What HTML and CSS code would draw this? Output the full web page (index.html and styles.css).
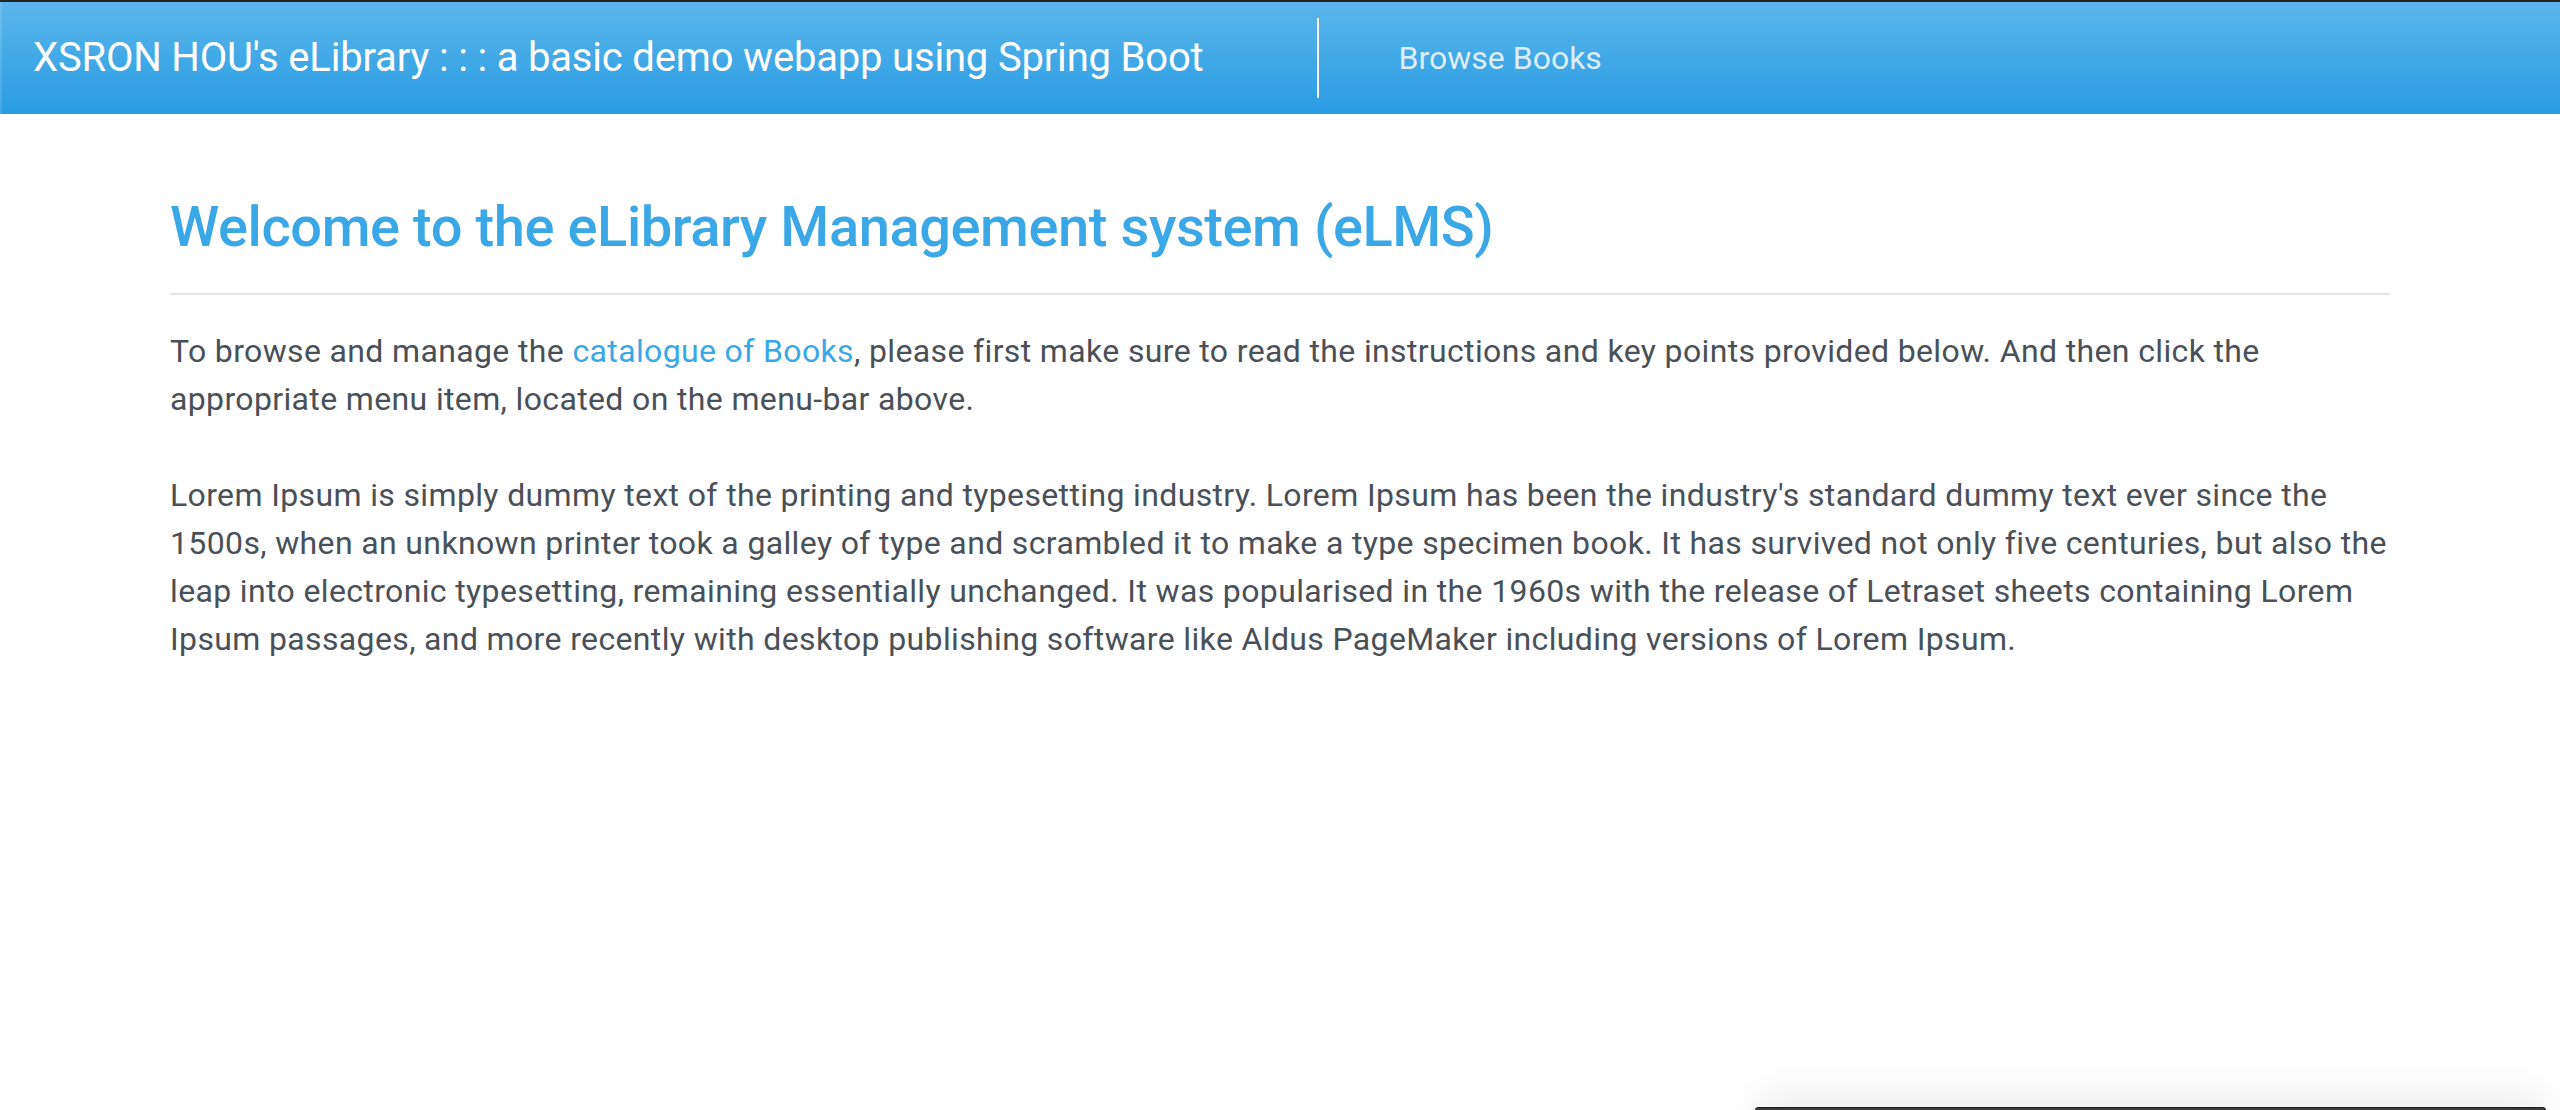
FILE: index.html
```html
<!DOCTYPE html>
<html lang="en">
<head>
<meta charset="utf-8">
<title>eLibrary</title>
<link rel="stylesheet" href="styles.css">
</head>
<body>
<div class="topstrip"></div>
<nav class="navbar">
  <a class="brand" href="#">XSRON HOU's eLibrary : : : a basic demo webapp using Spring Boot</a>
  <div class="navmenu">
    <a class="navlink" href="#">Browse Books</a>
  </div>
</nav>
<main class="container">
  <h3 class="title">Welcome to the eLibrary Management system (eLMS)</h3>
  <hr class="rule">
  <p class="lead-text">To browse and manage the <a class="link" href="#">catalogue of Books</a>, please first make sure to read the instructions and key points provided below. And then click the appropriate menu item, located on the menu-bar above.</p>
  <p class="body-text">Lorem Ipsum is simply dummy text of the printing and typesetting industry. Lorem Ipsum has been the industry's standard dummy text ever since the 1500s, when an unknown printer took a galley of type and scrambled it to make a type specimen book. It has survived not only five centuries, but also the leap into electronic typesetting, remaining essentially unchanged. It was popularised in the 1960s with the release of Letraset sheets containing Lorem Ipsum passages, and more recently with desktop publishing software like Aldus PageMaker including versions of Lorem Ipsum.</p>
</main>
<div class="overlay-bar"></div>
</body>
</html>
```
FILE: styles.css
```css
html, body {
  margin: 0;
  padding: 0;
  background: #ffffff;
}
body {
  font-family: Roboto, "Liberation Sans", sans-serif;
  font-size: 32px;
  line-height: 48px;
  color: #495057;
  height: 1110px;
  overflow: hidden;
}
.topstrip {
  height: 2px;
  background: #232323;
}
.navbar {
  height: 112px;
  box-sizing: border-box;
  padding: 16px 32px;
  display: flex;
  align-items: flex-start;
  background: linear-gradient(to bottom, #5cb6eb 0%, #289ce2 100%);
  border-left: 2px solid rgba(255, 255, 255, 0.12);
}
.brand {
  display: block;
  font-size: 40px;
  line-height: 60px;
  letter-spacing: -0.18px;
  padding: 10px 0;
  color: #ffffff;
  text-decoration: none;
  margin-left: -1px;
}
.navmenu {
  margin-left: 113px;
  height: 80px;
  border-left: 2px solid #ffffff;
  display: flex;
  align-items: center;
  padding-left: 80px;
}
.navlink {
  color: rgba(255, 255, 255, 0.82);
  text-decoration: none;
  font-size: 32px;
  line-height: 48px;
}
.container {
  width: 2220px;
  margin: 0 auto;
  padding-top: 80px;
}
.title {
  margin: 0;
  font-size: 56px;
  line-height: 67px;
  font-weight: 500;
  letter-spacing: -0.42px;
  color: #3aa7e6;
}
.rule {
  margin: 32px 0 32px;
  border: 0;
  height: 2px;
  background: #e5e5e5;
}
.lead-text,
.body-text {
  letter-spacing: 0.36px;
}
.lead-text {
  margin: 0 0 48px;
}
.body-text {
  margin: 0;
}
.link {
  color: #3aa7e6;
  text-decoration: none;
}
.overlay-bar {
  position: fixed;
  left: 1755px;
  top: 1107px;
  width: 789px;
  height: 20px;
  background: #3c3c3c;
  border: 1px solid #1e1e1e;
  border-radius: 3px 3px 0 0;
  box-shadow: 0 -6px 40px rgba(0, 0, 0, 0.12);
}
```
